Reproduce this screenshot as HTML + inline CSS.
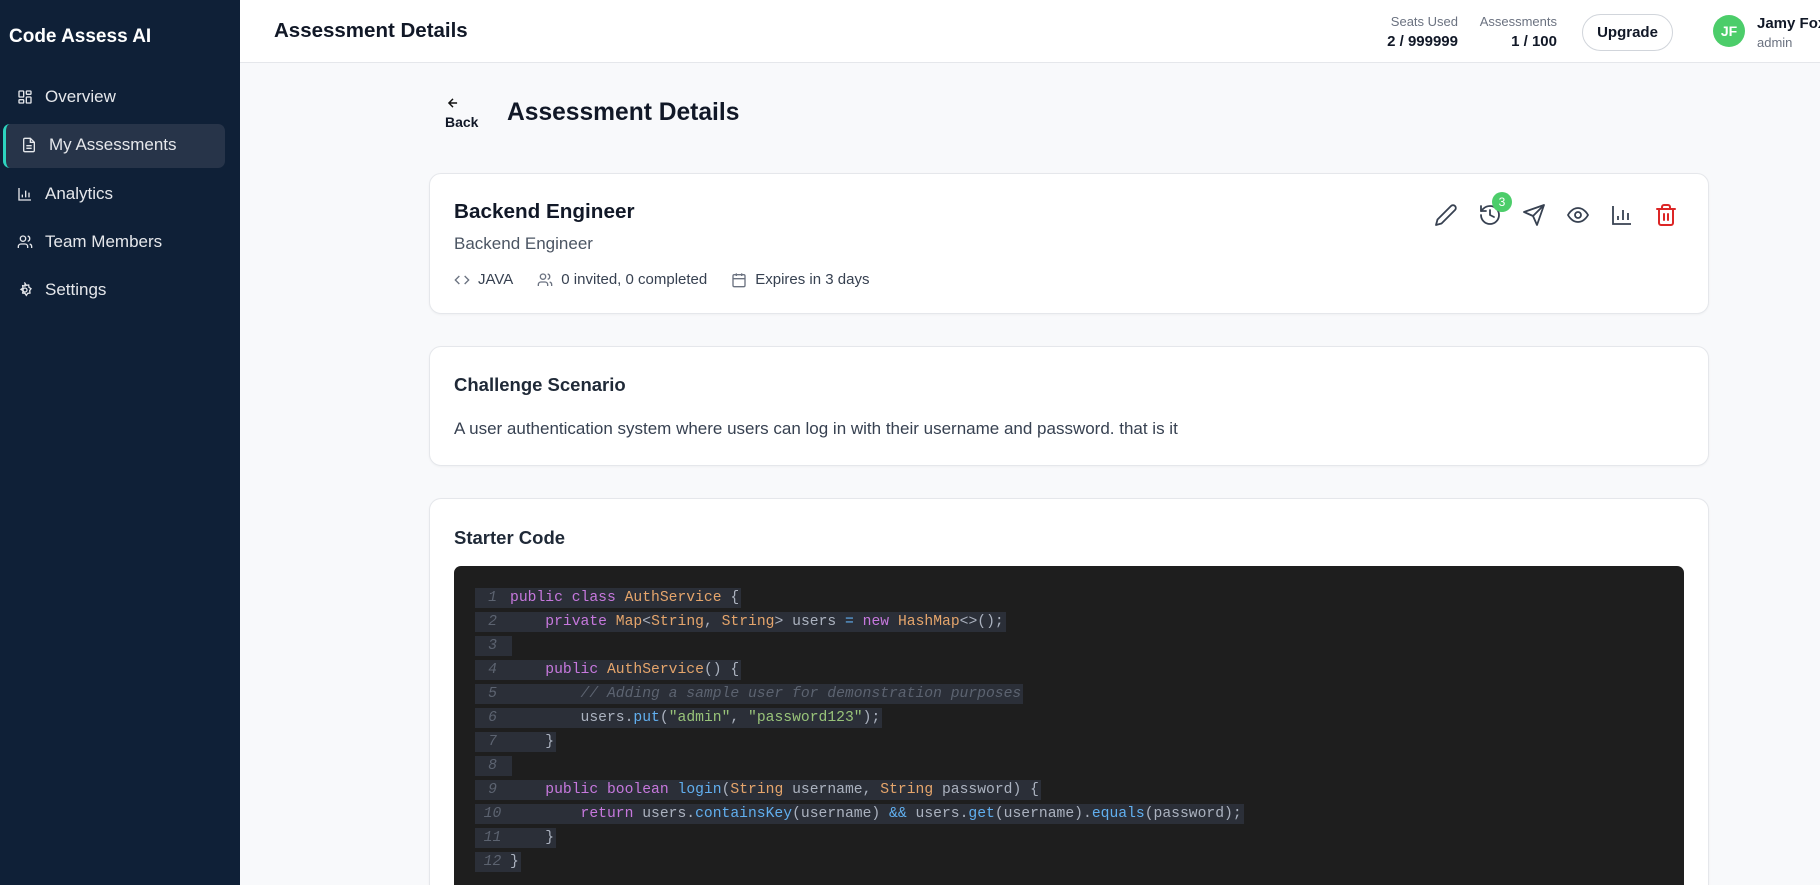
<!DOCTYPE html>
<html style="width:1820px;height:885px;overflow:hidden"><head><meta charset="utf-8"><style>
*{box-sizing:border-box;margin:0;padding:0}
body{width:1820px;height:885px;overflow:hidden;font-family:"Liberation Sans",sans-serif;background:#f8f9fb;position:relative;color:#111827}
.side{position:absolute;left:0;top:0;width:240px;height:885px;background:#0f2037;color:#fff}
.logo{position:absolute;left:9px;top:26px;font-size:19px;font-weight:bold}
.nav{position:absolute;left:17px;font-size:17px;display:flex;align-items:center;gap:12px;color:#e5e7eb}
.nav svg{width:16px;height:16px}
.active{position:absolute;left:3px;top:124px;width:222px;height:44px;background:#273449;border-radius:7px;border-left:3px solid #2dd4bf}
.hdr{position:absolute;left:240px;top:0;right:0;height:63px;background:#fff;border-bottom:1px solid #e5e7eb}
.abs{position:absolute}
.card{position:absolute;left:429px;width:1280px;background:#fff;border:1px solid #e5e7eb;border-radius:12px;box-shadow:0 1px 2px rgba(0,0,0,.04)}
.ic{position:absolute;top:203px;width:24px;height:24px}
.code{position:absolute;left:454px;top:566px;width:1230px;height:319px;background:#1e1e1e;border-radius:7px 7px 0 0}
.ln{position:absolute;left:475px;font-family:"Liberation Mono",monospace;font-size:14.7px;height:20px;line-height:20px;background:#2b2f38;color:#abb2bf;white-space:pre;padding-right:2px}
.ln i.n{display:inline-block;width:35px;text-align:center;color:#5c6370;font-style:italic}
.k{color:#c678dd}.t{color:#e5a56b}.f{color:#61afef}.s{color:#98c379}.c{color:#5c6370;font-style:italic}
</style></head><body>
<div class="side">
<div class="logo">Code Assess AI</div>
<div class="active"></div>
<div class="nav" style="top:87px"><svg viewBox="0 0 24 24" fill="none" stroke="#e5e7eb" stroke-width="2"><rect x="3" y="3" width="7" height="9" rx="1"/><rect x="14" y="3" width="7" height="5" rx="1"/><rect x="14" y="12" width="7" height="9" rx="1"/><rect x="3" y="16" width="7" height="5" rx="1"/></svg>Overview</div>
<div class="nav" style="top:135px;left:21px"><svg viewBox="0 0 24 24" fill="none" stroke="#e5e7eb" stroke-width="2"><path d="M14 2H6a2 2 0 0 0-2 2v16a2 2 0 0 0 2 2h12a2 2 0 0 0 2-2V8z"/><path d="M14 2v6h6M16 13H8M16 17H8"/></svg>My Assessments</div>
<div class="nav" style="top:184px"><svg viewBox="0 0 24 24" fill="none" stroke="#e5e7eb" stroke-width="2"><path d="M3 3v18h18M8 17v-4M13 17V7M18 17v-7"/></svg>Analytics</div>
<div class="nav" style="top:232px"><svg viewBox="0 0 24 24" fill="none" stroke="#e5e7eb" stroke-width="2"><circle cx="9" cy="7" r="4"/><path d="M2 21v-2a4 4 0 0 1 4-4h6a4 4 0 0 1 4 4v2M16 3.1a4 4 0 0 1 0 7.8M22 21v-2a4 4 0 0 0-3-3.9"/></svg>Team Members</div>
<div class="nav" style="top:280px"><svg viewBox="0 0 24 24" fill="none" stroke="#e5e7eb" stroke-width="2"><circle cx="12" cy="12" r="3"/><path d="M12 2l2 3 3.5-.5.5 3.5 3 2-2 3 .5 3.5-3.5.5-2 3-2-3-3.5-.5.5-3.5-3-2 3-2-.5-3.5 3.5.5z"/></svg>Settings</div>
</div>
<div class="hdr">
<div class="abs" style="left:34px;top:19px;font-size:20.5px;font-weight:bold">Assessment Details</div>
<div class="abs" style="right:362px;top:14px;text-align:right;font-size:13px;color:#6b7280">Seats Used<div style="color:#111827;font-weight:bold;font-size:15px;margin-top:4px">2 / 999999</div></div>
<div class="abs" style="right:263px;top:14px;text-align:right;font-size:13px;color:#6b7280">Assessments<div style="color:#111827;font-weight:bold;font-size:15px;margin-top:4px">1 / 100</div></div>
<div class="abs" style="left:1342px;top:14px;width:91px;height:37px;border:1px solid #d1d5db;border-radius:19px;text-align:center;line-height:35px;font-weight:bold;font-size:15px">Upgrade</div>
<div class="abs" style="left:1473px;top:15px;width:32px;height:32px;border-radius:50%;background:#4ccd6a;color:#fff;font-weight:bold;font-size:14px;text-align:center;line-height:32px">JF</div>
<div class="abs" style="left:1517px;top:15px;font-size:15px;font-weight:bold;white-space:nowrap">Jamy Fox<div style="font-size:13px;color:#6b7280;font-weight:normal;margin-top:3px">admin</div></div>
</div>
<svg class="abs" style="left:446px;top:96px" width="14" height="14" viewBox="0 0 24 24" fill="none" stroke="#111" stroke-width="2.5"><path d="M19 12H5M12 19l-7-7 7-7"/></svg>
<div class="abs" style="left:445px;top:114px;font-size:14px;font-weight:bold">Back</div>
<div class="abs" style="left:507px;top:99px;font-size:24.6px;font-weight:bold">Assessment Details</div>

<div class="card" style="top:173px;height:141px">
<div class="abs" style="left:24px;top:26px;font-size:20.7px;font-weight:bold">Backend Engineer</div>
<div class="abs" style="left:24px;top:60px;font-size:17px;color:#4b5563">Backend Engineer</div>
<div class="abs" style="left:24px;top:97px;font-size:15px;color:#374151;display:flex;align-items:center;gap:8px;white-space:nowrap">
<svg width="16" height="16" viewBox="0 0 24 24" fill="none" stroke="#6b7280" stroke-width="2"><path d="M16 18l6-6-6-6M8 6l-6 6 6 6"/></svg>JAVA
<svg style="margin-left:16px" width="16" height="16" viewBox="0 0 24 24" fill="none" stroke="#6b7280" stroke-width="2"><circle cx="9" cy="7" r="4"/><path d="M2 21v-2a4 4 0 0 1 4-4h6a4 4 0 0 1 4 4v2M16 3.1a4 4 0 0 1 0 7.8M22 21v-2a4 4 0 0 0-3-3.9"/></svg>0 invited, 0 completed
<svg style="margin-left:16px" width="16" height="16" viewBox="0 0 24 24" fill="none" stroke="#6b7280" stroke-width="2"><rect x="3" y="4" width="18" height="18" rx="2"/><path d="M16 2v4M8 2v4M3 10h18"/></svg>Expires in 3 days</div>
</div>
<svg class="ic" style="left:1434px" viewBox="0 0 24 24" fill="none" stroke="#374151" stroke-width="1.8" stroke-linecap="round" stroke-linejoin="round"><path d="M17 3a2.8 2.8 0 0 1 4 4L7.5 20.5 2 22l1.5-5.5z"/></svg>
<svg class="ic" style="left:1478px" viewBox="0 0 24 24" fill="none" stroke="#374151" stroke-width="1.8" stroke-linecap="round" stroke-linejoin="round"><path d="M3 12a9 9 0 1 0 9-9 9.75 9.75 0 0 0-6.74 2.74L3 8"/><path d="M3 3v5h5M12 7v5l4 2"/></svg>
<div class="abs" style="left:1492px;top:192px;width:20px;height:20px;border-radius:50%;background:#4ccd6a;color:#fff;font-size:12px;text-align:center;line-height:20px">3</div>
<svg class="ic" style="left:1522px" viewBox="0 0 24 24" fill="none" stroke="#374151" stroke-width="1.8" stroke-linecap="round" stroke-linejoin="round"><path d="M22 2L11 13M22 2l-7 20-4-9-9-4z"/></svg>
<svg class="ic" style="left:1566px" viewBox="0 0 24 24" fill="none" stroke="#374151" stroke-width="1.8"><path d="M2 12s3.5-7 10-7 10 7 10 7-3.5 7-10 7S2 12 2 12z"/><circle cx="12" cy="12" r="3"/></svg>
<svg class="ic" style="left:1610px" viewBox="0 0 24 24" fill="none" stroke="#374151" stroke-width="1.8"><path d="M3 3v18h18M8 17v-4M13 17V7M18 17v-7"/></svg>
<svg class="ic" style="left:1654px" viewBox="0 0 24 24" fill="none" stroke="#dc2626" stroke-width="2" stroke-linecap="round"><path d="M3 6h18M19 6v14a2 2 0 0 1-2 2H7a2 2 0 0 1-2-2V6M8 6V4a2 2 0 0 1 2-2h4a2 2 0 0 1 2 2v2M10 11v6M14 11v6"/></svg>

<div class="card" style="top:346px;height:120px">
<div class="abs" style="left:24px;top:27px;font-size:18.5px;font-weight:bold;color:#1f2937">Challenge Scenario</div>
<div class="abs" style="left:24px;top:72px;font-size:17px;color:#374151">A user authentication system where users can log in with their username and password. that is it</div>
</div>
<div class="card" style="top:498px;height:387px;border-bottom:none;border-radius:12px 12px 0 0">
<div class="abs" style="left:24px;top:28px;font-size:18.5px;font-weight:bold;color:#1f2937">Starter Code</div>
</div>
<div class="code"></div>
<div class="ln" style="top:588px"><i class="n">1</i><span class="k">public class</span> <span class="t">AuthService</span> {</div>
<div class="ln" style="top:612px"><i class="n">2</i>    <span class="k">private</span> <span class="t">Map</span>&lt;<span class="t">String</span>, <span class="t">String</span>&gt; users <span class="f">=</span> <span class="k">new</span> <span class="t">HashMap</span>&lt;&gt;();</div>
<div class="ln" style="top:636px"><i class="n">3</i></div>
<div class="ln" style="top:660px"><i class="n">4</i>    <span class="k">public</span> <span class="t">AuthService</span>() {</div>
<div class="ln" style="top:684px"><i class="n">5</i>        <span class="c">// Adding a sample user for demonstration purposes</span></div>
<div class="ln" style="top:708px"><i class="n">6</i>        users.<span class="f">put</span>(<span class="s">"admin"</span>, <span class="s">"password123"</span>);</div>
<div class="ln" style="top:732px"><i class="n">7</i>    }</div>
<div class="ln" style="top:756px"><i class="n">8</i></div>
<div class="ln" style="top:780px"><i class="n">9</i>    <span class="k">public boolean</span> <span class="f">login</span>(<span class="t">String</span> username, <span class="t">String</span> password) {</div>
<div class="ln" style="top:804px"><i class="n">10</i>        <span class="k">return</span> users.<span class="f">containsKey</span>(username) <span class="f">&amp;&amp;</span> users.<span class="f">get</span>(username).<span class="f">equals</span>(password);</div>
<div class="ln" style="top:828px"><i class="n">11</i>    }</div>
<div class="ln" style="top:852px"><i class="n">12</i>}</div>
</body></html>
